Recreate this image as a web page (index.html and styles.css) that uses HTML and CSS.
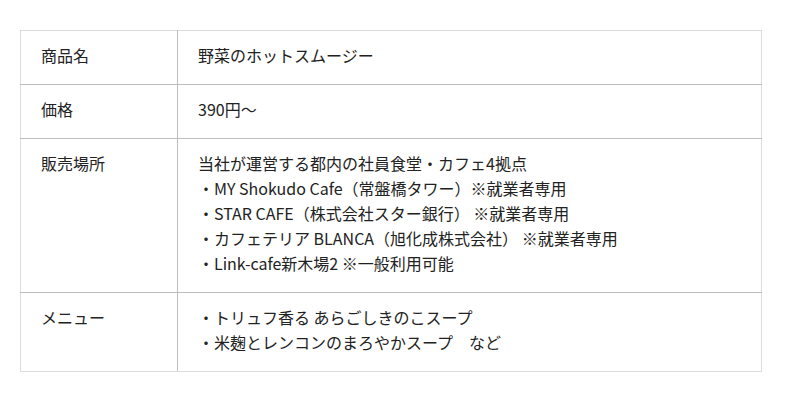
FILE: index.html
```html
<!DOCTYPE html>
<html lang="ja">
<head>
<meta charset="utf-8">
<link rel="stylesheet" href="styles.css">
</head>
<body>
<table class="spec">
  <tr>
    <th class="label">商品名</th>
    <td class="value">野菜のホットスムージー</td>
  </tr>
  <tr>
    <th class="label">価格</th>
    <td class="value">390円～</td>
  </tr>
  <tr>
    <th class="label">販売場所</th>
    <td class="value">当社が運営する都内の社員食堂・カフェ4拠点<br>・MY Shokudo Cafe（常盤橋タワー）※就業者専用<br>・STAR CAFE（株式会社スター銀行） ※就業者専用<br>・カフェテリア BLANCA（旭化成株式会社） ※就業者専用<br>・Link-cafe新木場2 ※一般利用可能</td>
  </tr>
  <tr>
    <th class="label">メニュー</th>
    <td class="value">・トリュフ香る あらごしきのこスープ<br>・米麹とレンコンのまろやかスープ　など</td>
  </tr>
</table>
</body>
</html>
```

FILE: styles.css
```css
html, body {
  margin: 0;
  padding: 0;
  background: #ffffff;
}
body {
  padding: 30px 20px;
  font-family: "Noto Sans CJK JP", "Noto Sans", sans-serif;
  font-size: 16px;
  color: #222222;
}
.spec {
  width: 742px;
  border-collapse: collapse;
}
.spec th,
.spec td {
  padding: 12px 20px 16px;
  line-height: 25px;
  text-align: left;
  vertical-align: top;
  font-weight: normal;
  border: 1px solid #bdbdbd;
}
.spec .label {
  width: 116px;
}
.spec tr:first-child th,
.spec tr:first-child td {
  border-top-color: #dcdcdc;
}
.spec tr:last-child th,
.spec tr:last-child td {
  border-bottom-color: #dcdcdc;
}
.spec th {
  border-left-color: #dcdcdc;
}
.spec td {
  border-right-color: #dcdcdc;
}
```
